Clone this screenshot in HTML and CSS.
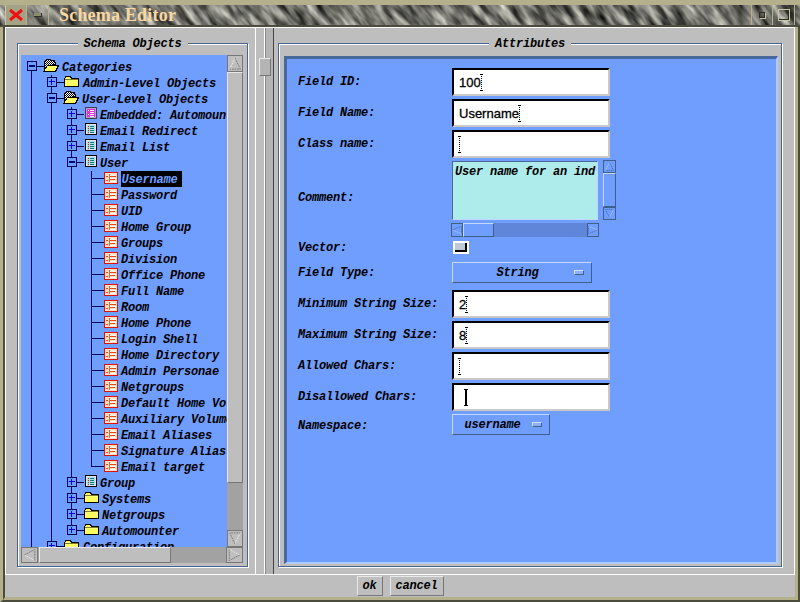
FILE: index.html
```html
<!DOCTYPE html>
<html lang="en">
<head>
    <meta charset="UTF-8">
    <title>Schema Editor</title>
    <link rel="stylesheet" href="styles.css">
</head>
<body>
    <svg class="defs" width="0" height="0">
        <defs>
            <pattern id="dither" width="2" height="2" patternUnits="userSpaceOnUse">
                <rect width="2" height="2" fill="#ffff50"/>
                <rect width="1" height="1" fill="#fff8a0"/>
            </pattern>
            <pattern id="check" width="2" height="2" patternUnits="userSpaceOnUse">
                <rect width="2" height="2" fill="#fff"/>
                <rect width="1" height="1" fill="#000"/>
                <rect x="1" y="1" width="1" height="1" fill="#000"/>
            </pattern>
            <filter id="marble" x="0" y="0" width="100%" height="100%" color-interpolation-filters="sRGB">
                <feTurbulence type="fractalNoise" baseFrequency="0.035 0.14" numOctaves="3" seed="7"/>
                <feColorMatrix values="0 0 0 1.1 -0.1  0 0 0 1.1 -0.1  0 0 0 1.05 -0.1  0 0 0 0 1"/>
            </filter>
            <symbol id="folder" viewBox="0 0 15 11">
                <path d="M.5 10.5v-8l1-1v-1h5l1 2h7v8z" fill="url(#dither)" stroke="#000"/>
                <path d="M1 3.5h13" stroke="#000" opacity=".5"/>
            </symbol>
            <symbol id="folder-open" viewBox="0 0 16 13">
                <path d="M1.5 11.5v-9l2-2h4l1 1h3l1 4h-3l-7 6z" fill="url(#check)" stroke="#000"/>
                <path d="M.5 12.5l4-6h11l-3 6z" fill="url(#dither)" stroke="#000"/>
            </symbol>
            <symbol id="doc" viewBox="0 0 12 12">
                <rect x=".5" y=".5" width="11" height="11" fill="#e4e4e4" stroke="#000"/>
                <rect x="2" y="2" width="8" height="8" fill="#a8e0e8"/>
                <path d="M5 3h4M5 5h4M5 7h4M5 9h4" stroke="#108080"/>
                <path d="M3 3h1M3 5h1M3 7h1M3 9h1" stroke="#e02020"/>
            </symbol>
            <symbol id="doc-pink" viewBox="0 0 12 12">
                <rect x=".5" y=".5" width="11" height="11" fill="#b8a0c8" stroke="#404050"/>
                <rect x="2" y="2" width="8" height="8" fill="#e030e0"/>
                <path d="M5 3h4M5 5h4M5 7h4M5 9h4" stroke="#fff"/>
                <path d="M3 3h1M3 7h1" stroke="#fff"/>
            </symbol>
            <symbol id="attr" viewBox="0 0 14 12">
                <rect x=".5" y=".5" width="13" height="11" fill="#ffe4c8" stroke="#e01010"/>
                <path d="M6 3h6M6 6h6M6 9h6" stroke="#fff"/>
                <path d="M5 2v8" stroke="#f06030"/>
                <path d="M2 4h2M2 8h2M6 4h6M6 7h5" stroke="#e84810"/>
            </symbol>
            <symbol id="arrow" viewBox="0 0 16 16" preserveAspectRatio="none">
                <path d="M8 2L2 14h12z" fill="var(--arrow-fill)"/>
                <path d="M8 2L2 14" stroke="var(--edge-light)" stroke-dasharray="2 1" fill="none"/>
                <path d="M8 2l6 12H2" stroke="var(--edge-dark)" stroke-dasharray="2 1" fill="none"/>
            </symbol>
        </defs>
    </svg>

    <div class="window">
        <div class="titlebar">
            <div class="texture"><svg width="1000" height="1000"><rect width="1000" height="1000" filter="url(#marble)"/></svg></div>
            <div class="wm-btn close">
                <svg width="16" height="14" viewBox="0 0 16 14"><path d="M2 2l12 10M14 2L2 12" stroke="#f01010" stroke-width="3"/></svg>
            </div>
            <div class="wm-btn"><span class="dash"></span></div>
            <div class="title">Schema Editor</div>
            <div class="wm-btn right"><span class="sq-small"></span></div>
            <div class="wm-btn"><span class="sq-big"></span></div>
        </div>

        <div class="frame">
            <div class="inner">
                <div class="main">
                    <div class="pane-left">
                        <div class="group tree-group">
                            <div class="legend">Schema Objects</div>
                            <div class="tree-wrap">
                                <div class="tree">
                                    <div class="row"><i class="tg minus first"><b></b></i><svg class="ic ic-open"><use href="#folder-open"/></svg><span>Categories</span></div>
                                    <div class="row"><i class="g"></i><i class="tg plus"><b></b></i><svg class="ic ic-folder"><use href="#folder"/></svg><span>Admin-Level Objects</span></div>
                                    <div class="row"><i class="g"></i><i class="tg minus"><b></b></i><svg class="ic ic-open"><use href="#folder-open"/></svg><span>User-Level Objects</span></div>
                                    <div class="row l2"><i class="g"></i><i class="g"></i><i class="tg plus"><b></b></i><svg class="ic ic-doc"><use href="#doc-pink"/></svg><span>Embedded: Automounter</span></div>
                                    <div class="row l2"><i class="g"></i><i class="g"></i><i class="tg plus"><b></b></i><svg class="ic ic-doc"><use href="#doc"/></svg><span>Email Redirect</span></div>
                                    <div class="row l2"><i class="g"></i><i class="g"></i><i class="tg plus"><b></b></i><svg class="ic ic-doc"><use href="#doc"/></svg><span>Email List</span></div>
                                    <div class="row l2"><i class="g"></i><i class="g"></i><i class="tg minus"><b></b></i><svg class="ic ic-doc"><use href="#doc"/></svg><span>User</span></div>
                                    <div class="row l3"><i class="g"></i><i class="g"></i><i class="g"></i><i class="tee"></i><svg class="ic ic-attr"><use href="#attr"/></svg><span class="selected">Username</span></div>
                                    <div class="row l3"><i class="g"></i><i class="g"></i><i class="g"></i><i class="tee"></i><svg class="ic ic-attr"><use href="#attr"/></svg><span>Password</span></div>
                                    <div class="row l3"><i class="g"></i><i class="g"></i><i class="g"></i><i class="tee"></i><svg class="ic ic-attr"><use href="#attr"/></svg><span>UID</span></div>
                                    <div class="row l3"><i class="g"></i><i class="g"></i><i class="g"></i><i class="tee"></i><svg class="ic ic-attr"><use href="#attr"/></svg><span>Home Group</span></div>
                                    <div class="row l3"><i class="g"></i><i class="g"></i><i class="g"></i><i class="tee"></i><svg class="ic ic-attr"><use href="#attr"/></svg><span>Groups</span></div>
                                    <div class="row l3"><i class="g"></i><i class="g"></i><i class="g"></i><i class="tee"></i><svg class="ic ic-attr"><use href="#attr"/></svg><span>Division</span></div>
                                    <div class="row l3"><i class="g"></i><i class="g"></i><i class="g"></i><i class="tee"></i><svg class="ic ic-attr"><use href="#attr"/></svg><span>Office Phone</span></div>
                                    <div class="row l3"><i class="g"></i><i class="g"></i><i class="g"></i><i class="tee"></i><svg class="ic ic-attr"><use href="#attr"/></svg><span>Full Name</span></div>
                                    <div class="row l3"><i class="g"></i><i class="g"></i><i class="g"></i><i class="tee"></i><svg class="ic ic-attr"><use href="#attr"/></svg><span>Room</span></div>
                                    <div class="row l3"><i class="g"></i><i class="g"></i><i class="g"></i><i class="tee"></i><svg class="ic ic-attr"><use href="#attr"/></svg><span>Home Phone</span></div>
                                    <div class="row l3"><i class="g"></i><i class="g"></i><i class="g"></i><i class="tee"></i><svg class="ic ic-attr"><use href="#attr"/></svg><span>Login Shell</span></div>
                                    <div class="row l3"><i class="g"></i><i class="g"></i><i class="g"></i><i class="tee"></i><svg class="ic ic-attr"><use href="#attr"/></svg><span>Home Directory</span></div>
                                    <div class="row l3"><i class="g"></i><i class="g"></i><i class="g"></i><i class="tee"></i><svg class="ic ic-attr"><use href="#attr"/></svg><span>Admin Personae</span></div>
                                    <div class="row l3"><i class="g"></i><i class="g"></i><i class="g"></i><i class="tee"></i><svg class="ic ic-attr"><use href="#attr"/></svg><span>Netgroups</span></div>
                                    <div class="row l3"><i class="g"></i><i class="g"></i><i class="g"></i><i class="tee"></i><svg class="ic ic-attr"><use href="#attr"/></svg><span>Default Home Volume</span></div>
                                    <div class="row l3"><i class="g"></i><i class="g"></i><i class="g"></i><i class="tee"></i><svg class="ic ic-attr"><use href="#attr"/></svg><span>Auxiliary Volume</span></div>
                                    <div class="row l3"><i class="g"></i><i class="g"></i><i class="g"></i><i class="tee"></i><svg class="ic ic-attr"><use href="#attr"/></svg><span>Email Aliases</span></div>
                                    <div class="row l3"><i class="g"></i><i class="g"></i><i class="g"></i><i class="tee"></i><svg class="ic ic-attr"><use href="#attr"/></svg><span>Signature Alias</span></div>
                                    <div class="row l3"><i class="g"></i><i class="g"></i><i class="g"></i><i class="tee end"></i><svg class="ic ic-attr"><use href="#attr"/></svg><span>Email target</span></div>
                                    <div class="row l2"><i class="g"></i><i class="g"></i><i class="tg plus"><b></b></i><svg class="ic ic-doc"><use href="#doc"/></svg><span>Group</span></div>
                                    <div class="row l2f"><i class="g"></i><i class="g"></i><i class="tg plus"><b></b></i><svg class="ic ic-folder"><use href="#folder"/></svg><span>Systems</span></div>
                                    <div class="row l2f"><i class="g"></i><i class="g"></i><i class="tg plus"><b></b></i><svg class="ic ic-folder"><use href="#folder"/></svg><span>Netgroups</span></div>
                                    <div class="row l2f"><i class="g"></i><i class="g"></i><i class="tg plus end"><b></b></i><svg class="ic ic-folder"><use href="#folder"/></svg><span>Automounter</span></div>
                                    <div class="row"><i class="g"></i><i class="tg plus"><b></b></i><svg class="ic ic-folder"><use href="#folder"/></svg><span>Configuration</span></div>
                                </div>
                                <div class="sb sb-v">
                                    <div class="sb-arrow"><svg><use href="#arrow"/></svg></div>
                                    <div class="sb-thumb tree-thumb-v"></div>
                                    <div class="sb-trough"></div>
                                    <div class="sb-arrow down"><svg><use href="#arrow"/></svg></div>
                                </div>
                            </div>
                            <div class="sb sb-h">
                                <div class="sb-arrow left"><svg><use href="#arrow"/></svg></div>
                                <div class="sb-thumb tree-thumb-h"></div>
                                <div class="sb-trough"></div>
                                <div class="sb-arrow right"><svg><use href="#arrow"/></svg></div>
                            </div>
                        </div>
                    </div>

                    <div class="sash"><div class="sash-handle"></div></div>

                    <div class="pane-right">
                        <div class="group attr-group">
                            <div class="legend">Attributes</div>
                            <div class="panel">
                                <div class="form">
                                    <label>Field ID:</label>
                                    <div class="field">100<span class="caret"></span></div>
                                    <label>Field Name:</label>
                                    <div class="field">Username<span class="caret"></span></div>
                                    <label>Class name:</label>
                                    <div class="field"><span class="caret"></span></div>
                                    <label class="comment-label">Comment:</label>
                                    <div class="comment-row">
                                        <div class="comment">User name for an ind</div>
                                        <div class="sb sb-v blue">
                                            <div class="sb-arrow"><svg><use href="#arrow"/></svg></div>
                                            <div class="sb-thumb"></div>
                                            <div class="sb-arrow down"><svg><use href="#arrow"/></svg></div>
                                        </div>
                                    </div>
                                    <span></span>
                                    <div class="sb sb-h blue">
                                        <div class="sb-arrow left"><svg><use href="#arrow"/></svg></div>
                                        <div class="sb-thumb comment-thumb-h"></div>
                                        <div class="sb-trough"></div>
                                        <div class="sb-arrow right"><svg><use href="#arrow"/></svg></div>
                                    </div>
                                    <label class="top vector-label">Vector:</label>
                                    <div class="check"><span></span></div>
                                    <label class="top type-label">Field Type:</label>
                                    <div class="option type-option"><span>String</span><i></i></div>
                                    <label>Minimum String Size:</label>
                                    <div class="field">2<span class="caret"></span></div>
                                    <label>Maximum String Size:</label>
                                    <div class="field">8<span class="caret"></span></div>
                                    <label>Allowed Chars:</label>
                                    <div class="field"><span class="caret"></span></div>
                                    <label>Disallowed Chars:</label>
                                    <div class="field"><span class="caret solid"></span></div>
                                    <label class="ns-label">Namespace:</label>
                                    <div class="option ns-option"><span>username</span><i></i></div>
                                </div>
                            </div>
                        </div>
                    </div>
                </div>

                <div class="footer">
                    <button class="btn btn-ok">ok</button>
                    <button class="btn btn-cancel">cancel</button>
                </div>
            </div>
        </div>
    </div>
</body>
</html>
```

FILE: styles.css
```css
* {
    box-sizing: border-box;
}

body {
    margin: 0;
    background-color: #bebebe;
    font-family: 'Liberation Mono', monospace;
    font-size: 12px;
    font-weight: bold;
    font-style: italic;
    letter-spacing: -0.2px;
    color: #000;
    overflow: hidden;
}

.defs {
    display: block;
    height: 0;
}

.window {
    width: 800px;
    height: 602px;
    display: flex;
    flex-direction: column;
}

/* title bar */
.titlebar {
    position: relative;
    height: 27px;
    flex: none;
    display: flex;
    align-items: stretch;
    padding-left: 5px;
    padding-right: 5px;
    border-top: 5px solid #b4b08c;
    border-bottom: 2px solid #4c4c3c;
    overflow: hidden;
    background-color: #777;
}

.texture {
    position: absolute;
    left: -100px;
    top: -450px;
    width: 1000px;
    height: 1000px;
    transform: rotate(-128deg);
}

.wm-btn {
    position: relative;
    width: 22px;
    flex: none;
    display: flex;
    align-items: center;
    justify-content: center;
    border-right: 1px solid #b4b08c;
}

.wm-btn.close {
    background-color: #a4a284;
    border-left: 1px solid #c8c6a4;
}

.wm-btn.right {
    border-left: 1px solid #b4b08c;
}

.dash {
    width: 8px;
    height: 4px;
    background-color: #8c8c70;
    border-bottom: 1px solid #303028;
    border-right: 1px solid #303028;
}

.sq-small {
    width: 6px;
    height: 6px;
    border: 1px solid #2c2c24;
    box-shadow: 1px 1px 0 #c8c6a4;
}

.sq-big {
    width: 12px;
    height: 12px;
    border: 1px solid #c8c6a4;
    box-shadow: inset -1px -1px 0 #2c2c24;
}

.title {
    position: relative;
    flex: 1;
    padding-left: 10px;
    font-family: 'Liberation Serif', serif;
    font-style: normal;
    font-size: 18px;
    letter-spacing: 0.2px;
    line-height: 20px;
    color: #f8d8a0;
}

/* outer frame */
.frame {
    flex: 1;
    display: flex;
    border-left: 3px solid #b4b08c;
    border-right: 2px solid #4c4c3c;
    border-bottom: 2px solid #4c4c3c;
}

.inner {
    flex: 1;
    display: flex;
    flex-direction: column;
    border-left: 2px solid #4c4c3c;
    border-right: 3px solid #b4b08c;
    border-bottom: 3px solid #b4b08c;
}

.main {
    height: 548px;
    display: flex;
    border: 1px solid #fff;
}

.pane-left {
    width: 249px;
    flex: none;
    display: flex;
    padding: 15px 7px 7px 11px;
}

.pane-right {
    flex: 1;
    min-width: 0;
    display: flex;
    padding: 15px 12px 7px 4px;
}

.sash {
    width: 19px;
    flex: none;
    display: flex;
    justify-content: center;
    border-left: 1px solid #fff;
    border-right: 1px solid #444;
    background: linear-gradient(90deg, transparent 8px, #fff 8px, #fff 9px, #888 9px, #888 10px, #b4b4b4 10px);
}

.sash-handle {
    width: 12px;
    height: 18px;
    margin-top: 30px;
    background-color: #b4b4b4;
    border: 1px solid;
    border-color: #e8e8e8 #777 #777 #e8e8e8;
}

/* etched groups */
.group {
    position: relative;
    flex: 1;
    min-width: 0;
    display: flex;
    flex-direction: column;
    border: 1px solid #48648c;
    box-shadow: 1px 1px 0 #fff, inset 1px 1px 0 #fff;
}

.tree-group {
    padding: 11px 4px 3px 3px;
}

.attr-group {
    padding: 12px 3px 2px 5px;
}

.legend {
    position: absolute;
    top: -8px;
    left: 50%;
    transform: translateX(-50%);
    padding: 0 6px;
    line-height: 16px;
    white-space: nowrap;
    background-color: #bebebe;
}

/* tree */
.tree-wrap {
    height: 492px;
    display: flex;
}

.tree {
    flex: 1;
    min-width: 0;
    padding-top: 4px;
    overflow: hidden;
    background-color: #709eff;
}

.row {
    position: relative;
    height: 16px;
    display: flex;
    align-items: flex-start;
    line-height: 18px;
    white-space: nowrap;
}

.g,
.tg,
.tee {
    position: relative;
    width: 20px;
    height: 16px;
    flex: none;
}

.g::before,
.tg::before,
.tee::before {
    content: "";
    position: absolute;
    left: 10px;
    top: 0;
    bottom: 0;
    width: 1px;
    background-color: #000050;
}

.tg::after,
.tee::after {
    content: "";
    position: absolute;
    left: 10px;
    top: 7px;
    width: 13px;
    height: 1px;
    background-color: #000050;
}

.tg.first::before {
    top: 7px;
}

.tg.end::before,
.tee.end::before {
    bottom: 8px;
}

.tg b {
    position: absolute;
    z-index: 1;
    left: 6px;
    top: 2px;
    width: 10px;
    height: 10px;
    border: 1px solid #000050;
    background-color: #709eff;
}

.tg b::before {
    content: "";
    position: absolute;
    left: 1px;
    top: 3px;
    width: 6px;
    height: 2px;
    background-color: #000070;
}

.tg.plus b::before {
    height: 1px;
    top: 3px;
    background-color: #0000f0;
}

.tg.plus b::after {
    content: "";
    position: absolute;
    left: 3px;
    top: 1px;
    width: 1px;
    height: 6px;
    background-color: #0000f0;
}

.ic {
    flex: none;
    shape-rendering: crispEdges;
}

.ic-open {
    width: 16px;
    height: 13px;
    margin: 0 3px 0 2px;
}

.ic-folder {
    width: 15px;
    height: 11px;
    margin: 1px 4px 0 3px;
}

.ic-doc {
    width: 12px;
    height: 12px;
    margin: 0 3px 0 4px;
}

.l2f .ic-folder {
    margin: 1px 3px 0 3px;
}

.ic-attr {
    width: 14px;
    height: 12px;
    margin: 1px 3px 0 3px;
    position: relative;
}

.selected {
    display: block;
    width: 61px;
    height: 16px;
    padding-left: 1px;
    margin-left: -0.5px;
    background-color: #000;
    color: #709eff;
}

/* scrollbars */
.sb {
    --arrow-fill: #bebebe;
    --edge-light: #f0f0f0;
    --edge-dark: #707070;
    --thumb: #bebebe;
    --thumb-light: #e8e8e8;
    --thumb-dark: #777;
    --trough: #a2a2a2;
    display: flex;
    flex: none;
    background-color: var(--trough);
}

.sb.blue {
    --arrow-fill: #709eff;
    --edge-light: #c4d8ff;
    --edge-dark: #40608c;
    --thumb: #709eff;
    --thumb-light: #c4d8ff;
    --thumb-dark: #40608c;
    --trough: #5f86d8;
}

.sb-v {
    width: 16px;
    flex-direction: column;
}

.sb-h {
    height: 16px;
}

.sb-arrow {
    width: 16px;
    height: 17px;
    flex: none;
    background-color: var(--arrow-fill);
    border: 1px solid;
    border-color: var(--thumb-dark);
}

.sb-arrow svg {
    display: block;
    width: 100%;
    height: 100%;
}

.sb-arrow.down svg {
    transform: rotate(180deg);
}

.sb-arrow.left svg {
    transform: rotate(-90deg);
}

.sb-arrow.right svg {
    transform: rotate(90deg);
}

.sb-h .sb-arrow {
    width: 17px;
    height: 16px;
}

.sb-thumb {
    flex: none;
    background-color: var(--thumb);
    border: 1px solid;
    border-color: var(--thumb-light) var(--thumb-dark) var(--thumb-dark) var(--thumb-light);
}

.sb-trough {
    flex: 1;
}

.tree-thumb-v {
    height: 411px;
}

.tree-thumb-h {
    width: 132px;
    margin-left: 1px;
}

/* attributes */
.panel {
    flex: 1;
    padding: 9px 0 0 11px;
    background-color: #709eff;
    border-style: solid;
    border-width: 3px 2px 2px 3px;
    border-color: #48689c #b0ccff #b0ccff #48689c;
}

.form {
    display: grid;
    grid-template-columns: 154px 1fr;
    grid-template-rows: 28px 28px 28px 59px 14px 19px 25px 28px 28px 28px 28px 21px;
    row-gap: 3px;
    align-items: center;
}

.form label.top {
    align-self: start;
}

.comment-label {
    margin-top: 14px;
}

.vector-label {
    margin-top: 1px;
}

.type-label {
    margin-top: 4px;
}

.ns-label {
    margin-top: 2px;
}

.field {
    width: 158px;
    height: 28px;
    padding-left: 5px;
    display: flex;
    align-items: center;
    background-color: #fff;
    border: 2px solid;
    border-color: #000 #c8c8c8 #c8c8c8 #000;
    font-family: 'Liberation Sans', sans-serif;
    font-size: 13px;
    font-weight: normal;
    font-style: normal;
    letter-spacing: 0;
    -webkit-text-stroke: 0.3px #000;
}

.caret {
    position: relative;
    width: 1px;
    height: 17px;
    border-left: 1px dotted #000;
}

.caret::before,
.caret::after {
    content: "";
    position: absolute;
    left: -2px;
    width: 3px;
    height: 1px;
    background-color: #000;
}

.caret::before {
    top: 0;
}

.caret::after {
    bottom: 0;
}

.caret.solid {
    width: 2px;
    margin-left: 6px;
    border-left: 2px solid #000;
}

.caret.solid::before,
.caret.solid::after {
    left: -3px;
    width: 4px;
}

.comment-row {
    display: flex;
    gap: 5px;
    height: 59px;
}

.comment {
    width: 146px;
    height: 59px;
    padding-left: 2px;
    padding-top: 1px;
    line-height: 18px;
    white-space: nowrap;
    overflow: hidden;
    background-color: #aeecec;
    border: 1px solid;
    border-color: #48689c #c4d8ff #c4d8ff #48689c;
}

.comment-row .sb-v {
    width: 13px;
    margin-top: -1px;
    height: 60px;
}

.comment-row .sb-arrow {
    width: 13px;
    height: 13px;
}

.comment-row .sb-thumb {
    flex: 1;
}

.form > .sb-h {
    width: 148px;
    height: 14px;
    margin-left: -1px;
}

.form > .sb-h .sb-arrow {
    width: 12px;
    height: 14px;
}

.comment-thumb-h {
    width: 31px;
}

.check {
    width: 16px;
    height: 13px;
    margin-top: 1px;
    margin-left: 1px;
    padding: 2px;
    align-self: start;
    background-color: #fff;
}

.check span {
    display: block;
    height: 100%;
    background-color: #c0c8d8;
    border-right: 2px solid #000;
    border-bottom: 2px solid #000;
}

.option {
    height: 21px;
    display: flex;
    align-items: center;
    align-self: start;
    background-color: #709eff;
    border: 1px solid;
    border-color: #c4d8ff #40608c #40608c #c4d8ff;
}

.option span {
    flex: 1;
    text-align: center;
}

.option i {
    width: 10px;
    height: 5px;
    flex: none;
    background-color: #8cb0ff;
    border: 1px solid;
    border-color: #d0e0ff #40608c #40608c #d0e0ff;
}

.type-option {
    width: 140px;
    padding-right: 7px;
}

.type-option span {
    padding-left: 8px;
}

.ns-option {
    width: 98px;
    padding-right: 7px;
}

/* footer */
.footer {
    flex: 1;
    display: flex;
    justify-content: center;
    align-items: flex-start;
    gap: 7px;
    padding-top: 1px;
}

.btn {
    height: 20px;
    padding: 0;
    font: inherit;
    letter-spacing: inherit;
    color: #000;
    background-color: #bebebe;
    border: 1px solid;
    border-color: #e8e8e8 #777 #777 #e8e8e8;
}

.btn-ok {
    width: 26px;
}

.btn-cancel {
    width: 54px;
}
```
